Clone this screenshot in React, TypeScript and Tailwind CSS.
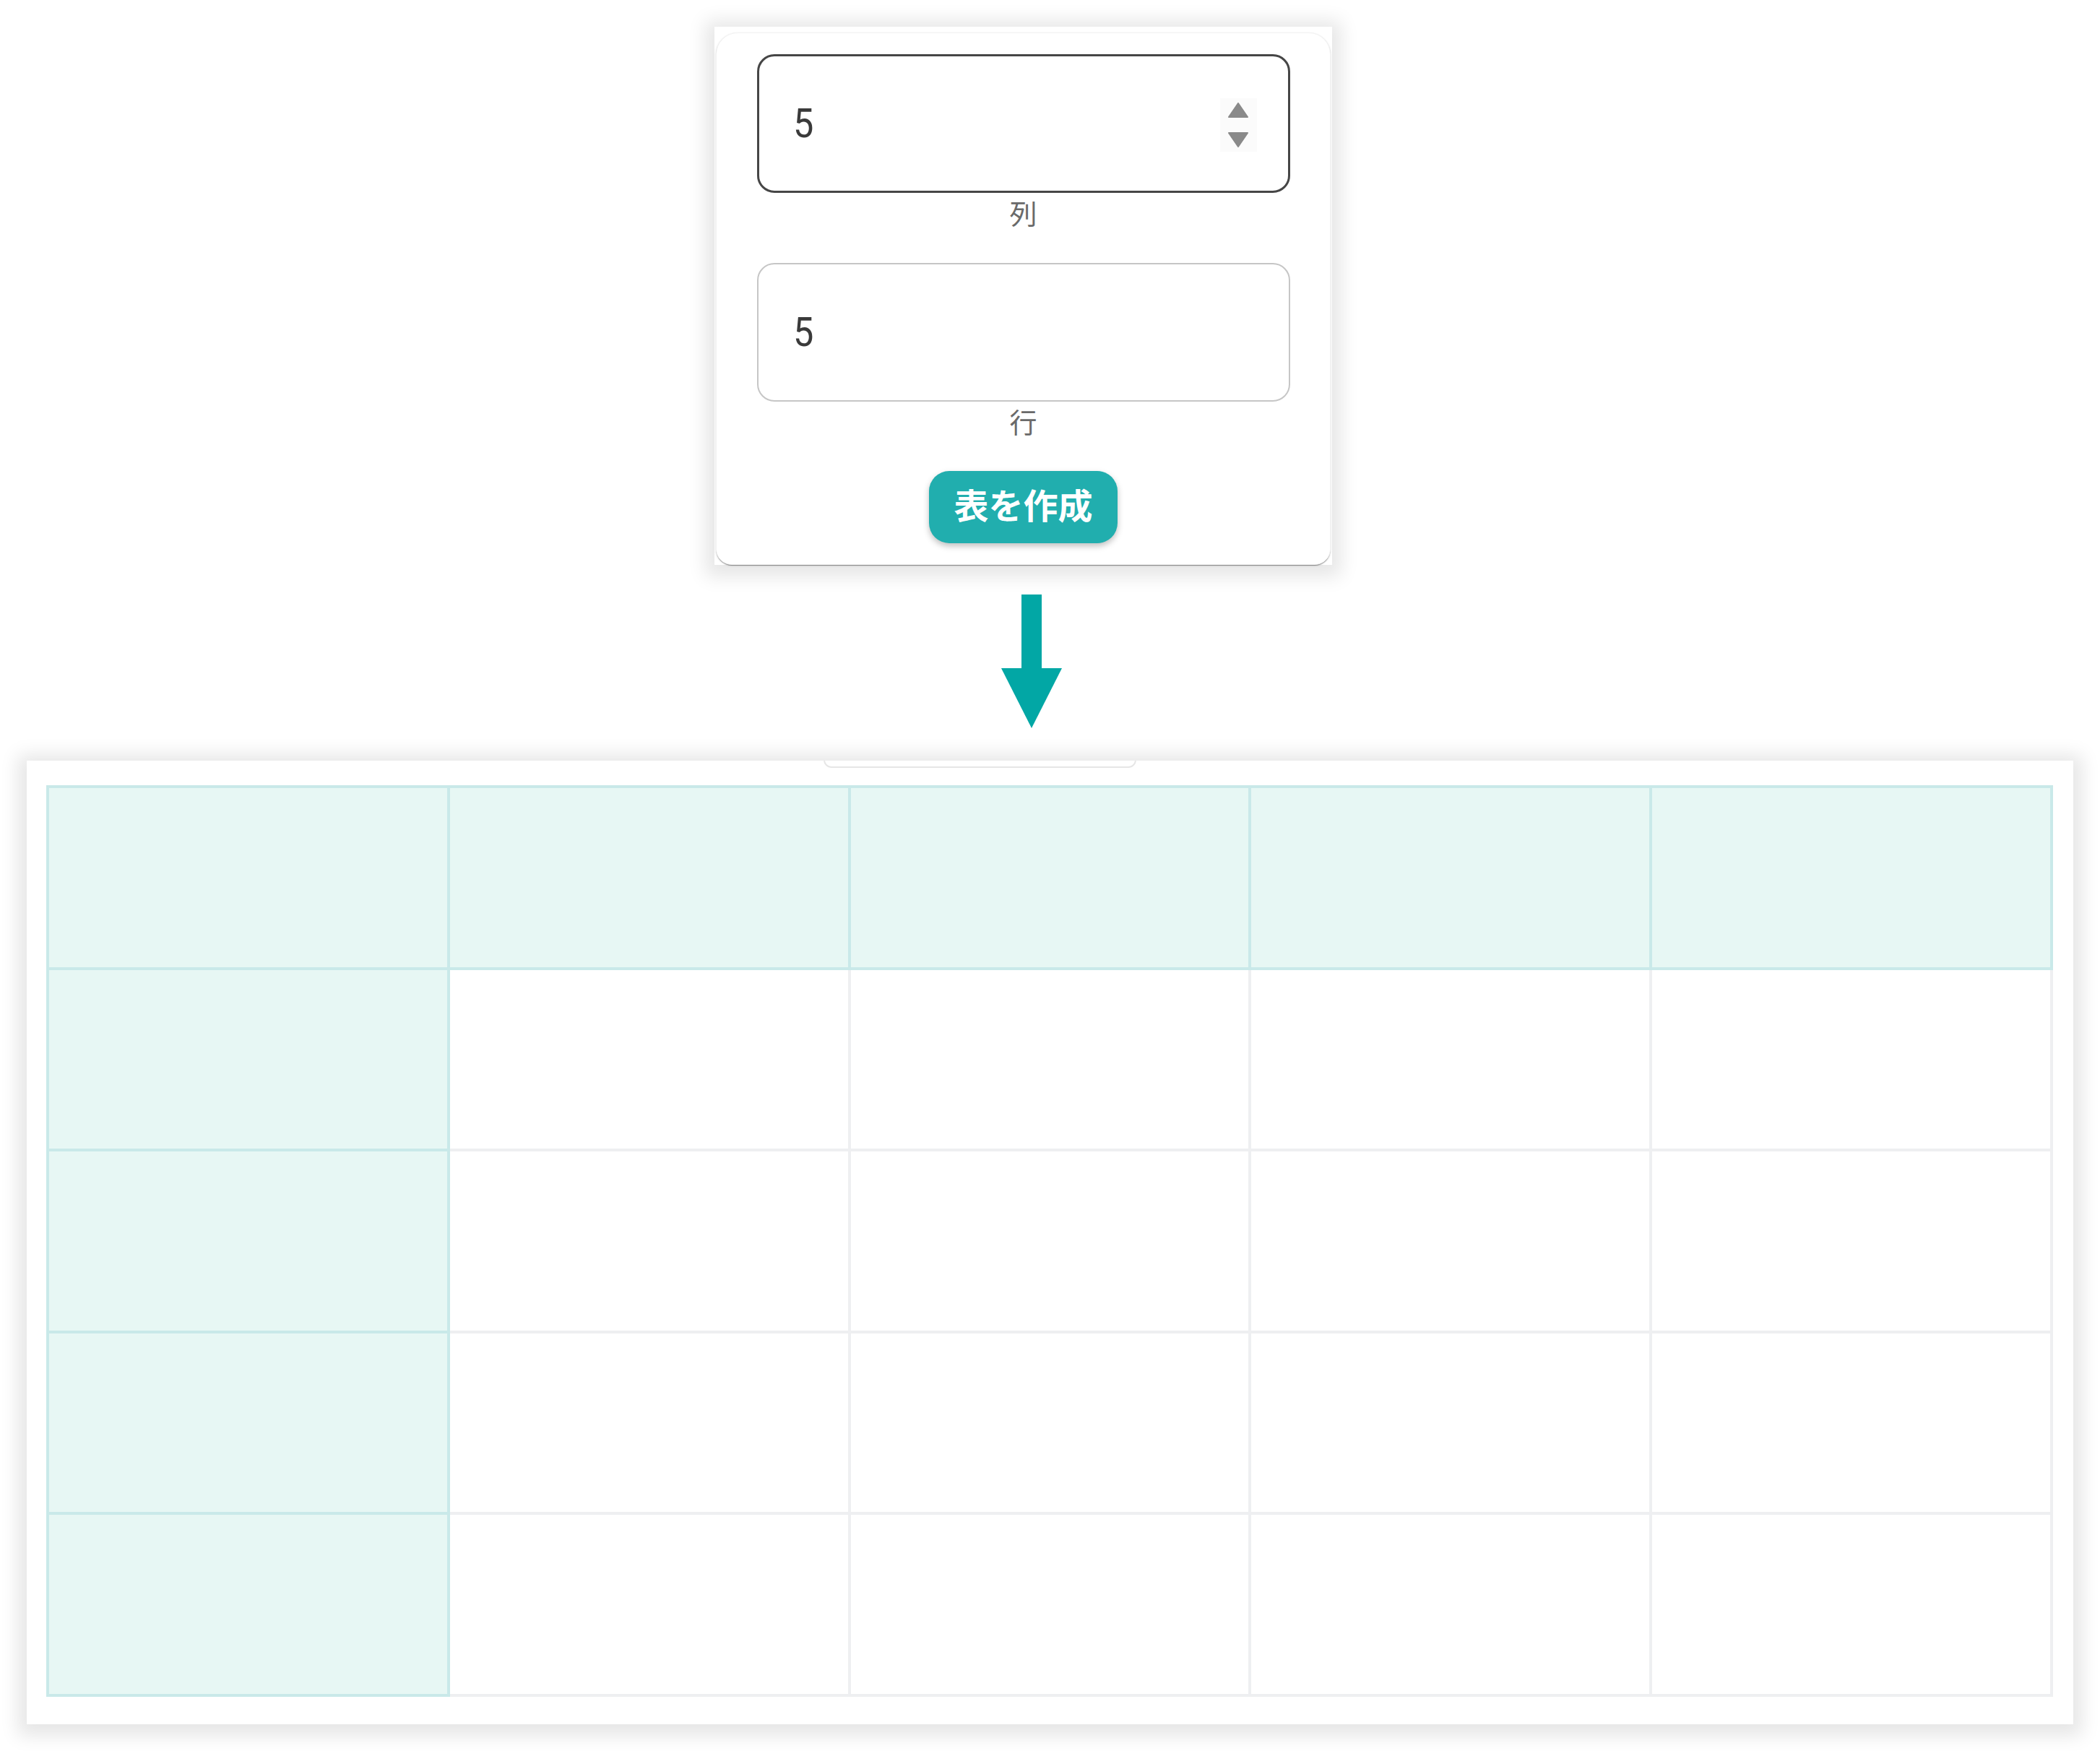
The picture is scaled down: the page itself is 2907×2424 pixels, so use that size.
import React from "react";

const jp = "font-['Roboto','Noto_Sans_CJK_JP',sans-serif]";

function Spinner() {
  return (
    <div className="absolute left-[638px] top-[58px] w-[51px] h-[74px] bg-[#fbfbfb] flex flex-col items-center justify-center gap-[20px]">
      <svg width="28" height="21" viewBox="0 0 28 21">
        <path d="M14 1 L27 20 L1 20 Z" fill="#8a8a8a" strokeLinejoin="round" stroke="#8a8a8a" strokeWidth="2" />
      </svg>
      <svg width="28" height="21" viewBox="0 0 28 21">
        <path d="M1 1 L27 1 L14 20 Z" fill="#8a8a8a" strokeLinejoin="round" stroke="#8a8a8a" strokeWidth="2" />
      </svg>
    </div>
  );
}

function TopCard() {
  return (
    <div className="w-[855px] h-[745px] bg-white shadow-[0_4px_24px_12px_rgba(0,0,0,0.1)] px-[2px] pt-[8px]">
      <div className="h-[737px] rounded-t-[30px] rounded-b-[22px] bg-white border border-[#f3f3f3] shadow-[0_2px_1px_-1px_rgba(0,0,0,0.25),0_1px_1px_0_rgba(0,0,0,0.16),0_1px_3px_0_rgba(0,0,0,0.12)] px-[56px] pt-[29px] flex flex-col items-center">
        <div className="relative w-[738px] h-[192px] border-[3px] border-[#464646] rounded-[24px] flex items-center pl-[47px]">
          <span className="text-[56px] leading-none text-[#3a3a3a] font-['Roboto',sans-serif] scale-x-[0.9] origin-left">5</span>
          <Spinner />
        </div>
        <div className={`mt-[6px] h-[48px] text-[38px] leading-[48px] text-[#6a6a6a] ${jp}`}>列</div>
        <div className="mt-[43px] relative w-[738px] h-[192px] border-[2px] border-[#c6c6c6] rounded-[24px] flex items-center pl-[48px]">
          <span className="text-[56px] leading-none text-[#3a3a3a] font-['Roboto',sans-serif] scale-x-[0.9] origin-left">5</span>
        </div>
        <div className={`mt-[6px] h-[48px] text-[38px] leading-[48px] text-[#6a6a6a] ${jp}`}>行</div>
        <div className={`mt-[42px] w-[261px] h-[100px] rounded-[28px] bg-[#21aeae] shadow-[0_4px_8px_rgba(0,0,0,0.25)] flex items-center justify-center text-white font-bold text-[48px] ${jp}`}>
          表を作成
        </div>
      </div>
    </div>
  );
}

function Arrow() {
  return (
    <svg width="84" height="185" viewBox="0 0 84 185">
      <rect x="28" y="0" width="28" height="103" fill="#02a7a5" />
      <path d="M0 102 L84 102 L42 185 Z" fill="#02a7a5" />
    </svg>
  );
}

function TableFrame() {
  const rows = [0, 1, 2, 3, 4];
  const cols = [0, 1, 2, 3, 4];
  return (
    <div className="relative w-[2833px] h-[1334px] bg-white shadow-[0_4px_24px_12px_rgba(0,0,0,0.1)] pl-[27px] pt-[34px]">
      <div className="absolute left-0 top-0 w-full h-[12px] overflow-hidden">
        <div className="absolute left-[1103px] top-[-12px] w-[433px] h-[22px] rounded-[12px] border-[2px] border-[#e6e6e6] bg-white" />
      </div>
      <table className="relative w-[2778px] h-[1258px] border-collapse table-fixed">
        <tbody>
          {rows.map((r) => (
            <tr key={r} className="h-[251.6px]">
              {cols.map((c) => {
                const teal = r === 0 || c === 0;
                return (
                  <td
                    key={c}
                    className={
                      teal
                        ? "border-[4px] border-[#c9e9e9] bg-[#e7f7f4]"
                        : "border-[4px] border-[#eeeff1] bg-white"
                    }
                  />
                );
              })}
            </tr>
          ))}
        </tbody>
      </table>
    </div>
  );
}

export default function App() {
  return (
    <div className="w-[2907px] h-[2424px] bg-white overflow-hidden flex flex-col items-start">
      <div className="mt-[37px] ml-[989px]">
        <TopCard />
      </div>
      <div className="mt-[41px] ml-[1386px] flex">
        <Arrow />
      </div>
      <div className="mt-[45px] ml-[37px]">
        <TableFrame />
      </div>
    </div>
  );
}
